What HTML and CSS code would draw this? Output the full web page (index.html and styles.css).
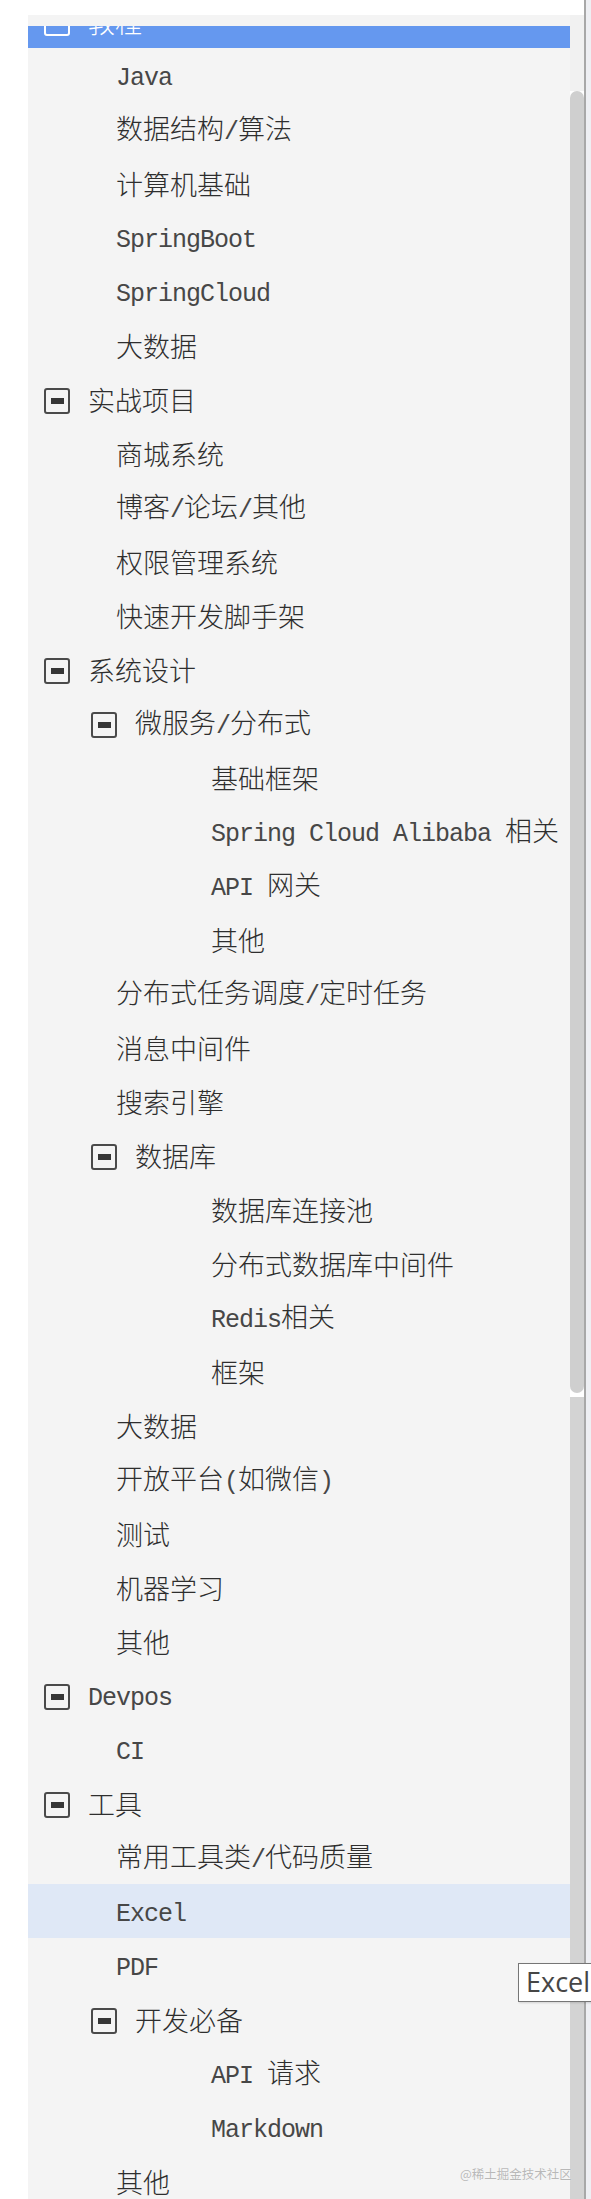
FILE: index.html
```html
<!DOCTYPE html>
<html lang="zh-CN">
<head>
<meta charset="utf-8">
<title>Tree</title>
<link rel="stylesheet" href="styles.css">
</head>
<body>
<div class="frame">
  <div class="gutter"></div>
  <div class="panel">
    <div class="viewport">
      <div class="tree">
        <div class="row l0 selected"><span class="box"></span><span class="label">教程</span></div>
        <div class="row l1"><span class="label"><span class="en">Java</span></span></div>
        <div class="row l1"><span class="label">数据结构<span class="en">/</span>算法</span></div>
        <div class="row l1"><span class="label">计算机基础</span></div>
        <div class="row l1"><span class="label"><span class="en">SpringBoot</span></span></div>
        <div class="row l1"><span class="label"><span class="en">SpringCloud</span></span></div>
        <div class="row l1"><span class="label">大数据</span></div>
        <div class="row l0"><span class="box"><i></i></span><span class="label">实战项目</span></div>
        <div class="row l1"><span class="label">商城系统</span></div>
        <div class="row l1"><span class="label">博客<span class="en">/</span>论坛<span class="en">/</span>其他</span></div>
        <div class="row l1"><span class="label">权限管理系统</span></div>
        <div class="row l1"><span class="label">快速开发脚手架</span></div>
        <div class="row l0"><span class="box"><i></i></span><span class="label">系统设计</span></div>
        <div class="row l1b"><span class="box"><i></i></span><span class="label">微服务<span class="en">/</span>分布式</span></div>
        <div class="row l2"><span class="label">基础框架</span></div>
        <div class="row l2"><span class="label"><span class="en">Spring Cloud Alibaba </span>相关</span></div>
        <div class="row l2"><span class="label"><span class="en">API </span>网关</span></div>
        <div class="row l2"><span class="label">其他</span></div>
        <div class="row l1"><span class="label">分布式任务调度<span class="en">/</span>定时任务</span></div>
        <div class="row l1"><span class="label">消息中间件</span></div>
        <div class="row l1"><span class="label">搜索引擎</span></div>
        <div class="row l1b"><span class="box"><i></i></span><span class="label">数据库</span></div>
        <div class="row l2"><span class="label">数据库连接池</span></div>
        <div class="row l2"><span class="label">分布式数据库中间件</span></div>
        <div class="row l2"><span class="label"><span class="en">Redis</span>相关</span></div>
        <div class="row l2"><span class="label">框架</span></div>
        <div class="row l1"><span class="label">大数据</span></div>
        <div class="row l1"><span class="label">开放平台<span class="en">(</span>如微信<span class="en">)</span></span></div>
        <div class="row l1"><span class="label">测试</span></div>
        <div class="row l1"><span class="label">机器学习</span></div>
        <div class="row l1"><span class="label">其他</span></div>
        <div class="row l0"><span class="box"><i></i></span><span class="label"><span class="en">Devpos</span></span></div>
        <div class="row l1"><span class="label"><span class="en">CI</span></span></div>
        <div class="row l0"><span class="box"><i></i></span><span class="label">工具</span></div>
        <div class="row l1"><span class="label">常用工具类<span class="en">/</span>代码质量</span></div>
        <div class="row l1 hover"><span class="label"><span class="en">Excel</span></span></div>
        <div class="row l1"><span class="label"><span class="en">PDF</span></span></div>
        <div class="row l1b"><span class="box"><i></i></span><span class="label">开发必备</span></div>
        <div class="row l2"><span class="label"><span class="en">API </span>请求</span></div>
        <div class="row l2"><span class="label"><span class="en">Markdown</span></span></div>
        <div class="row l1"><span class="label">其他</span></div>
      </div>
    </div>
  </div>
  <div class="scrollbar">
    <div class="sb-top"></div>
    <div class="sb-track"></div>
    <div class="sb-thumb"></div>
    <div class="sb-gap"></div>
    <div class="sb-rest"></div>
  </div>
  <div class="edge"></div>
  <div class="outside"></div>
  <div class="tooltip">Excel</div>
  <div class="watermark">@稀土掘金技术社区</div>
</div>
</body>
</html>
```
FILE: styles.css
```css
html, body {
  margin: 0;
  padding: 0;
  background: #ffffff;
}

.frame {
  position: relative;
  display: flex;
  width: 591px;
  height: 2199px;
  overflow: hidden;
  font-family: "Noto Sans CJK SC", "Liberation Mono", sans-serif;
  font-size: 27px;
  font-weight: 300;
  color: #2e2e2e;
}

.gutter {
  width: 28px;
  flex: none;
  background: #ffffff;
}

.panel {
  width: 542px;
  flex: none;
  margin-top: 15px;
  padding-top: 11px;
  background: #f4f4f4;
  display: flex;
  flex-direction: column;
}

.viewport {
  flex: 1;
  overflow: hidden;
}

.tree {
  margin-top: -32px;
  display: flex;
  flex-direction: column;
}

.row {
  height: 54px;
  flex: none;
  display: flex;
  align-items: center;
  box-sizing: border-box;
  white-space: pre;
}

.row.l0 { padding-left: 16px; }
.row.l1 { padding-left: 88px; }
.row.l1b { padding-left: 63px; }
.row.l2 { padding-left: 183px; }

.row.l0 .box,
.row.l1b .box {
  margin-right: 18px;
}

.row.selected {
  background: #6598ef;
  color: #ffffff;
}

.row.hover {
  background: #dfe8f6;
}

.box {
  width: 26px;
  height: 26px;
  flex: none;
  box-sizing: border-box;
  border: 2px solid #4a4a4a;
  border-radius: 3px;
  display: flex;
  align-items: center;
  justify-content: center;
  margin-top: 3px;
}

.box i {
  display: block;
  width: 13px;
  height: 6px;
  background: #363636;
}

.row.selected .box {
  border-color: #ffffff;
}

.label {
  line-height: 1;
}

.en {
  font-family: "Liberation Mono", monospace;
  font-size: 25px;
  font-weight: 400;
  letter-spacing: -1px;
  color: #474747;
}

.scrollbar {
  width: 14px;
  flex: none;
  display: flex;
  flex-direction: column;
}

.sb-top {
  height: 15px;
  flex: none;
  background: #ffffff;
}

.sb-track {
  height: 76px;
  flex: none;
  background: #f1f1f1;
}

.sb-thumb {
  height: 1302px;
  flex: none;
  background: #cfcfcf;
  border-radius: 7px;
}

.sb-gap {
  height: 4px;
  flex: none;
  background: #ffffff;
}

.sb-rest {
  flex: 1;
  background: #d3d3d3;
}

.edge {
  width: 2px;
  flex: none;
  background: #a8a8a8;
}

.outside {
  flex: 1;
  background: #eeeff3;
}

.tooltip {
  position: absolute;
  left: 518px;
  top: 1963px;
  height: 39px;
  box-sizing: border-box;
  padding: 0 12px 0 7px;
  border: 1px solid #767676;
  background: #ffffff;
  box-shadow: 1px 1px 2px rgba(0, 0, 0, 0.15);
  font-family: "Open Sans", "Noto Sans", sans-serif;
  font-weight: 400;
  font-size: 27px;
  line-height: 36px;
  color: #464646;
}

.watermark {
  position: absolute;
  left: 460px;
  top: 2164px;
  font-family: "Noto Sans CJK SC", sans-serif;
  font-size: 12.5px;
  font-weight: 400;
  color: #b8b8b8;
  text-shadow: 0 0 1px #ffffff;
  white-space: nowrap;
}
```
